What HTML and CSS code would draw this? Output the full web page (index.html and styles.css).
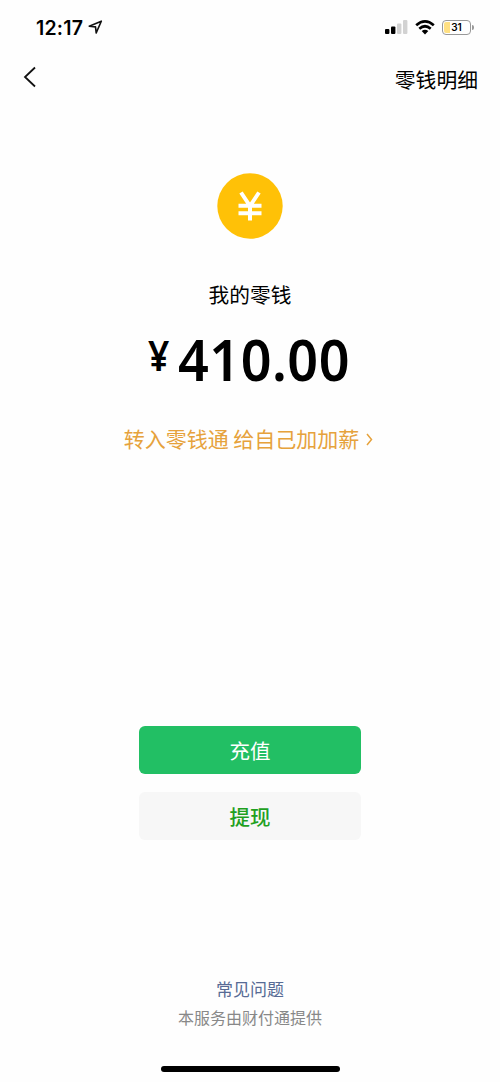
FILE: index.html
```html
<!DOCTYPE html>
<html lang="zh-CN">
<head>
<meta charset="utf-8">
<title>零钱</title>
<link rel="stylesheet" href="styles.css">
</head>
<body>
<div class="screen">
  <header class="status">
    <span class="time">12:17</span>
    <svg class="location" width="15" height="14" viewBox="0 0 15 14"><path d="M1.200 6.200 13.300 1.200 8.200 12.900 7.500 6.900Z" fill="none" stroke="#111" stroke-width="1.600" stroke-linejoin="round"/></svg>
    <div class="indicators">
      <svg width="23" height="15" viewBox="0 0 23 15"><rect x="0" y="9" width="4.4" height="5" rx="1"/><rect x="6" y="6.5" width="4.4" height="7.5" rx="1"/><rect x="12" y="3.5" width="4.4" height="10.500" rx="1" fill="#d2d2d2"/><rect x="18" y="0" width="4.400" height="14" rx="1" fill="#d2d2d2"/></svg>
      <svg class="wifi" width="20" height="15" viewBox="0 0 20 15"><g fill="none" stroke="#000" stroke-width="2.700"><path d="M1.2 5.300Q10-2.400 18.800 5.300"/><path d="M4.300 8.700Q10 3.800 15.700 8.700"/></g><path d="M6.700 11.100Q10 8.500 13.300 11.100L10 14.500Z"/></svg>
      <div class="battery"><div class="cell">31</div><i class="cap"></i></div>
    </div>
  </header>
  <nav class="nav">
    <svg class="back" width="14" height="22" viewBox="0 0 14 22"><path d="M12 1.500 2 11 12 20.500" fill="none" stroke="#111" stroke-width="1.800"/></svg>
    <span class="detail">零钱明细</span>
  </nav>
  <main class="main">
    <svg class="coin" width="66" height="66" viewBox="0 0 66 66"><circle cx="33" cy="33" r="32.700" fill="#ffc107"/><path d="M24 19.500 33 33 42 19.500M33 32V47.500M21.500 32.800H44.500M21.500 40.300H44.500" fill="none" stroke="#fff" stroke-width="4"/></svg>
    <h1 class="label">我的零钱</h1>
    <div class="balance"><span class="yen">¥</span><span class="amount">410.00</span></div>
    <div class="promo"><span>转入零钱通 给自己加加薪</span><svg width="7" height="13" viewBox="0 0 7 13"><path d="M1 1 5.500 6.500 1 12" fill="none" stroke="#e6a23c" stroke-width="1.500"/></svg></div>
    <div class="actions">
      <button class="button primary">充值</button>
      <button class="button secondary">提现</button>
    </div>
  </main>
  <footer class="footer">
    <a class="faq">常见问题</a>
    <span class="provider">本服务由财付通提供</span>
    <div class="home"></div>
  </footer>
</div>
</body>
</html>
```
FILE: styles.css
```css
* { box-sizing: border-box; }
body { margin: 0; background: #fefefe; color: #000; font-family: "Noto Sans CJK SC", sans-serif; }
svg { display: block; flex: none; }
.screen { width: 500px; height: 1082px; display: flex; flex-direction: column; background: #fefefe; overflow: hidden; }
.status { height: 54px; padding: 0 26px 0 36px; display: flex; align-items: center; }
.time { padding-top: 1px; font: 600 19.500px/24px Inter, sans-serif; letter-spacing: .2px; }
.location { margin-left: 5px; }
.indicators { margin-left: auto; display: flex; align-items: center; }
.wifi { margin-left: 7px; }
.battery { margin-left: 7px; display: flex; align-items: center; gap: 1px; }
.cell { width: 29px; height: 15px; border: 1px solid #999; border-radius: 4px; background: linear-gradient(90deg, #ffe083 7px, transparent 7px); background-clip: content-box; padding: 1px; font: 600 10px/11px Inter, sans-serif; text-align: center; }
.cap { width: 2px; height: 5px; border-radius: 0 2px 2px 0; background: #999; }
.nav { height: 46px; padding: 0 22px 0 23px; display: flex; align-items: center; justify-content: space-between; }
.detail { font-size: 20.800px; line-height: 30px; padding-top: 4px; }
.main { display: flex; flex-direction: column; align-items: center; padding-top: 73px; }
.label { margin: 40px 0 0; font-size: 20.700px; line-height: 30px; font-weight: 400; }
.balance { margin-top: 20px; width: 204px; height: 60px; display: flex; align-items: flex-start; font-family: "Noto Sans", sans-serif; font-weight: 600; }
.yen { flex: none; width: 30px; font-size: 41px; line-height: 52px; transform: scaleX(.91); transform-origin: left; }
.amount { flex: none; font-size: 58px; line-height: 60px; letter-spacing: .5px; transform: scaleX(.93); transform-origin: left; }
.promo { margin-top: 34px; margin-right: 3px; display: flex; align-items: center; gap: 7px; color: #e6a23c; font-size: 21px; line-height: 30px; }
.promo svg { margin-top: 3px; }
.actions { margin-top: 273px; display: flex; flex-direction: column; gap: 18px; }
.button { width: 222px; height: 48px; padding: 0; border: 0; border-radius: 6px; font: 500 20.500px/48px "Noto Sans CJK SC", sans-serif; }
.primary { background: #22bf64; color: #fff; font-weight: 400; }
.secondary { background: #f7f7f7; color: #1fa01f; }
.footer { margin-top: auto; display: flex; flex-direction: column; align-items: center; }
.faq { color: #576b95; font-size: 17px; line-height: 26px; }
.provider { margin-top: 2px; color: #888; font-size: 16px; line-height: 26px; }
.home { margin: 36px 0 10px; width: 179px; height: 6px; border-radius: 3px; background: #000; }
```
